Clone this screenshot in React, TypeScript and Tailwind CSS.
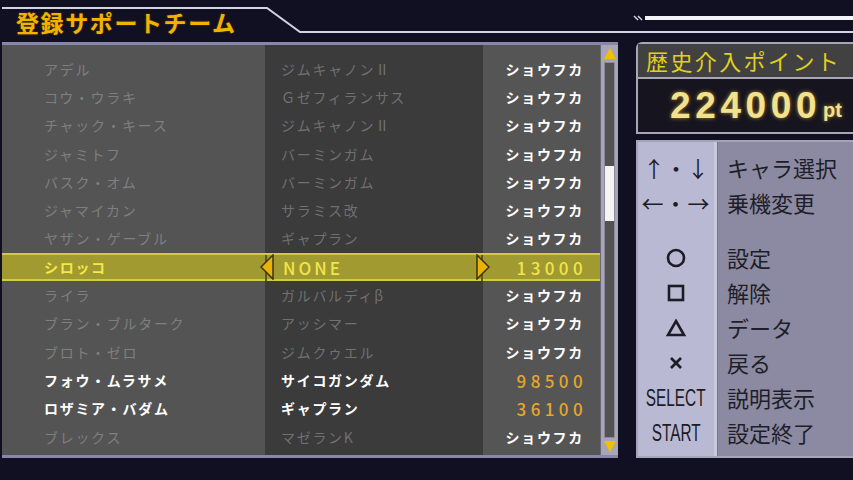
import React from 'react';

type Row = { name: string; ms: string; cost: string; hi?: boolean; sel?: boolean };

const rows: Row[] = [
  { name: 'アデル', ms: 'ジムキャノンⅡ', cost: 'ショウフカ' },
  { name: 'コウ・ウラキ', ms: 'Ｇゼフィランサス', cost: 'ショウフカ' },
  { name: 'チャック・キース', ms: 'ジムキャノンⅡ', cost: 'ショウフカ' },
  { name: 'ジャミトフ', ms: 'バーミンガム', cost: 'ショウフカ' },
  { name: 'バスク・オム', ms: 'バーミンガム', cost: 'ショウフカ' },
  { name: 'ジャマイカン', ms: 'サラミス改', cost: 'ショウフカ' },
  { name: 'ヤザン・ゲーブル', ms: 'ギャプラン', cost: 'ショウフカ' },
  { name: 'シロッコ', ms: 'NONE', cost: '13000', sel: true },
  { name: 'ライラ', ms: 'ガルバルディβ', cost: 'ショウフカ' },
  { name: 'ブラン・ブルターク', ms: 'アッシマー', cost: 'ショウフカ' },
  { name: 'ブロト・ゼロ', ms: 'ジムクゥエル', cost: 'ショウフカ' },
  { name: 'フォウ・ムラサメ', ms: 'サイコガンダム', cost: '98500', hi: true },
  { name: 'ロザミア・バダム', ms: 'ギャプラン', cost: '36100', hi: true },
  { name: 'ブレックス', ms: 'マゼランK', cost: 'ショウフカ' },
];

const jp = "font-['Noto_Sans_CJK_JP','Noto_Sans',sans-serif]";

function Tri({ dir }: { dir: 'l' | 'r' }) {
  return (
    <svg width="14" height="26" viewBox="0 0 14 26" className="block">
      {dir === 'l' ? (
        <polygon points="13,1 1,13 13,25" fill="#e8b20a" stroke="#3a3410" strokeWidth="1.5" />
      ) : (
        <polygon points="1,1 13,13 1,25" fill="#e8b20a" stroke="#3a3410" strokeWidth="1.5" />
      )}
    </svg>
  );
}

function ListRow({ r }: { r: Row }) {
  const isNum = /^\d+$/.test(r.cost);
  if (r.sel) {
    return (
      <div className="relative h-[28.3px] grid grid-cols-[263px_218px_117px] bg-[#a09a30] border-y-2 border-[#d2ca40]">
        <div className="pl-[42px] flex items-center text-[14px] tracking-[1.7px] font-bold text-[#f4e84a]">{r.name}</div>
        <div className="pl-[16px] flex items-center text-[17px] tracking-[3px] font-medium text-[#f0e64a] border-x-2 border-[#5e5a1c]">{r.ms}</div>
        <div className="pr-[13px] flex items-center justify-end text-[17px] tracking-[4.4px] font-medium text-[#f0e64a]">{r.cost}</div>
        <div className="absolute left-[258px] top-[-1px]"><Tri dir="l" /></div>
        <div className="absolute left-[474px] top-[-1px]"><Tri dir="r" /></div>
      </div>
    );
  }
  return (
    <div className="h-[28.3px] grid grid-cols-[263px_218px_117px]">
      <div className={`pl-[42px] flex items-center text-[14px] tracking-[1.7px] ${r.hi ? 'text-white font-bold' : 'text-[#7f7f7f]'}`}>{r.name}</div>
      <div className={`pl-[16px] flex items-center text-[14px] tracking-[1.7px] ${r.hi ? 'text-white font-bold' : 'text-[#707070]'}`}>{r.ms}</div>
      <div
        className={`flex items-center justify-end ${
          isNum ? 'pr-[13px] text-[17px] tracking-[4.4px] font-medium text-[#e6a62a]' : 'pr-[16px] text-[14px] tracking-[1.7px] text-white font-bold'
        }`}
      >
        {r.cost}
      </div>
    </div>
  );
}

function Scrollbar() {
  return (
    <div className="w-[18px] bg-[#a8a6b6] flex flex-col items-center border-l border-[#6a6878]">
      <svg width="12" height="12" viewBox="0 0 12 12" className="mt-[3px] shrink-0">
        <polygon points="6,0 12,11 0,11" fill="#f2c000" />
      </svg>
      <div className="flex-1 w-[11px] my-[2px] bg-[#525252] border border-[#8c8a98] flex flex-col">
        <div className="h-[103px]" />
        <div className="h-[55px] bg-[#f4f4f4]" />
      </div>
      <svg width="12" height="12" viewBox="0 0 12 12" className="mb-[3px] shrink-0">
        <polygon points="0,1 12,1 6,12" fill="#f2c000" />
      </svg>
    </div>
  );
}

function Btn({ kind }: { kind: 'o' | 'sq' | 'tri' | 'x' }) {
  return (
    <svg width="22" height="22" viewBox="0 0 22 22">
      {kind === 'o' && <circle cx="11" cy="11" r="8" fill="none" stroke="#1c1c24" strokeWidth="2.6" />}
      {kind === 'sq' && <rect x="4" y="4" width="14" height="14" fill="none" stroke="#1c1c24" strokeWidth="2.6" />}
      {kind === 'tri' && <polygon points="11,4 19,18 3,18" fill="none" stroke="#1c1c24" strokeWidth="2.6" strokeLinejoin="miter" />}
      {kind === 'x' && (
        <g stroke="#1c1c24" strokeWidth="2.6">
          <line x1="6" y1="6" x2="16" y2="16" />
          <line x1="16" y1="6" x2="6" y2="16" />
        </g>
      )}
    </svg>
  );
}

function Narrow({ children }: { children: React.ReactNode }) {
  return (
    <span className="inline-block scale-x-[0.64] font-['Liberation_Sans',sans-serif] text-[24px] leading-none text-[#1c1c24]">
      {children}
    </span>
  );
}

export default function App() {
  const labels1 = ['キャラ選択', '乗機変更'];
  const labels2 = ['設定', '解除', 'データ', '戻る', '説明表示', '設定終了'];
  const rowCls = 'h-[35px] flex items-center';
  return (
    <div className={`w-[853px] h-[480px] bg-[#110f22] overflow-hidden ${jp}`}>
      {/* header */}
      <div className="relative h-[42px] pl-[16px] pt-[8px]">
        <svg className="absolute left-0 top-0" width="853" height="42" viewBox="0 0 853 42">
          <polyline points="2,8 267,8 300,32 853,32" fill="none" stroke="#d2d2e2" strokeWidth="2" />
          <rect x="645" y="16" width="208" height="4" fill="#f4f4f8" />
          <g stroke="#d8d8e4" strokeWidth="1.5">
            <line x1="634" y1="16" x2="638" y2="20" />
            <line x1="638" y1="16" x2="642" y2="20" />
          </g>
        </svg>
        <span className="relative text-[23px] leading-[28px] tracking-[1.6px] font-bold text-[#f0b400] [text-shadow:0_0_2px_#6a4c00]">
          登録サポートチーム
        </span>
      </div>

      <div className="flex">
        {/* list panel */}
        <div className="ml-[2px] w-[616px] h-[416px] flex flex-col">
          <div className="h-[3px] bg-[#8a86aa]" />
          <div className="flex-1 flex">
            <div className="w-[598px] pt-[10px] bg-[linear-gradient(to_right,#545454_0_263px,#3b3b3b_263px_481px,#555555_481px)]">
              {rows.map((r, i) => (
                <ListRow key={i} r={r} />
              ))}
            </div>
            <Scrollbar />
          </div>
          <div className="h-[3px] bg-[#8a86aa]" />
        </div>

        {/* right side */}
        <div className="ml-[18px] flex-1 flex flex-col">
          <div className="h-[92px] border-2 border-r-0 border-[#a6a6b6] rounded-tl-[6px] flex flex-col">
            <div className="h-[33px] bg-[#414141] pl-[8px] flex items-center text-[22px] tracking-[2.4px] text-[#e2d01e]">
              歴史介入ポイント
            </div>
            <div className="h-[2px] bg-[#a6a6b6]" />
            <div className="flex-1 bg-[#16141f] flex items-center justify-end pr-[11px] font-['Liberation_Sans',sans-serif] font-bold text-[#f2e290] [text-shadow:0_0_4px_#a8862a]">
              <span className="text-[37px] leading-none tracking-[4.6px]">224000</span>
              <span className="text-[20px] leading-none ml-[2px] mt-[8px]">pt</span>
            </div>
          </div>

          <div className="mt-[6px] h-[318px] border-2 border-r-0 border-[#a4a4b8] flex">
            <div className="w-[79px] bg-[#b9b9d3] border-r-[3px] border-[#cacadf] pt-[8px] flex flex-col items-center">
              <div className={`${rowCls} text-[22px] text-[#1c1c24]`}>↑・↓</div>
              <div className={`${rowCls} text-[22px] text-[#1c1c24] tracking-[1px]`}>←・→</div>
              <div className="h-[20px]" />
              <div className={rowCls}><Btn kind="o" /></div>
              <div className={rowCls}><Btn kind="sq" /></div>
              <div className={rowCls}><Btn kind="tri" /></div>
              <div className={rowCls}><Btn kind="x" /></div>
              <div className={rowCls}><Narrow>SELECT</Narrow></div>
              <div className={rowCls}><Narrow>START</Narrow></div>
            </div>
            <div className="flex-1 bg-[#8c8aa2] border-l border-[#787690] pt-[8px] pl-[9px] text-[22px] text-[#1e1e28]">
              {labels1.map((l) => (
                <div key={l} className={rowCls}>{l}</div>
              ))}
              <div className="h-[20px]" />
              {labels2.map((l) => (
                <div key={l} className={rowCls}>{l}</div>
              ))}
            </div>
          </div>
        </div>
      </div>
    </div>
  );
}
